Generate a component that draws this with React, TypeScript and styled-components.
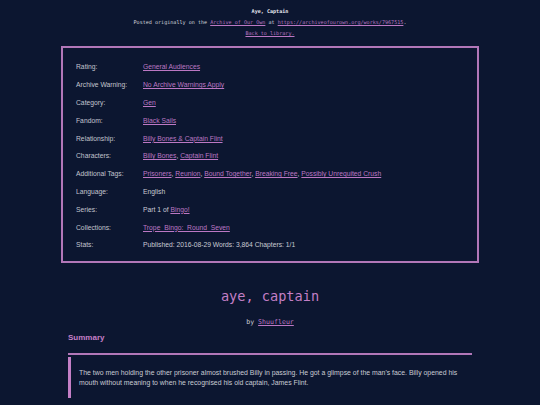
import React, { FC } from "react";
import styled, { createGlobalStyle } from "styled-components";

const GlobalStyle = createGlobalStyle`
  html, body {
    margin: 0;
    padding: 0;
    background: #0c1630;
  }
  body {
    font-family: "Liberation Sans", Arial, sans-serif;
    color: #c9cbd4;
  }
`;

const Page = styled.div`
  width: 540px;
  min-height: 405px;
  display: flex;
  flex-direction: column;
  align-items: center;
  background: #0c1630;
`;

const Header = styled.header`
  display: flex;
  flex-direction: column;
  align-items: center;
  padding-top: 6px;
  font-family: "DejaVu Sans Mono", "Liberation Mono", monospace;
  font-size: 5.1px;
  line-height: 11px;
  color: #d4d6de;
`;

const WorkTitle = styled.div`
  font-weight: 700;
  color: #e4e6ee;
`;

const Link = styled.a`
  color: #bc78c4;
  text-decoration: underline;
  text-underline-offset: 1px;
`;

const MetaBox = styled.dl`
  box-sizing: border-box;
  width: 418px;
  margin: 7px 0 0;
  padding: 10px 13px 7px;
  border: 2px solid #b277b8;
  display: grid;
  grid-template-columns: 67px 1fr;
  grid-auto-rows: 17.8px;
  align-items: center;
  font-size: 6.75px;
`;

const Label = styled.dt`
  margin: 0;
  color: #c3c5cf;
`;

const Value = styled.dd`
  margin: 0;
  color: #c9cbd4;
  white-space: nowrap;
`;

const Title = styled.h1`
  margin: 18px 0 0;
  font-family: "DejaVu Sans Mono", "Liberation Mono", monospace;
  font-weight: 400;
  font-size: 13.6px;
  line-height: 30px;
  color: #c47fc6;
`;

const Byline = styled.div`
  margin-top: 4px;
  font-family: "DejaVu Sans Mono", "Liberation Mono", monospace;
  font-size: 6.6px;
  line-height: 14px;
  color: #c9cbd4;
`;

const Summary = styled.section`
  width: 404px;
  margin-top: 2px;
`;

const SummaryHeading = styled.h2`
  margin: 0;
  padding-bottom: 8px;
  border-bottom: 2px solid #b277b8;
  font-size: 8px;
  line-height: 14px;
  font-weight: 700;
  color: #c47fc6;
`;

const Quote = styled.blockquote`
  margin: 2px 0 0;
  padding: 11px 12px 10px 8px;
  border-left: 3px solid #c47fc6;
  font-size: 6.9px;
  line-height: 10px;
  color: #c9cbd4;
`;

interface IMetaRow {
  label: string;
  value: React.ReactNode;
}

const links = (items: string[], sep = ", ") =>
  items.map((item, i) => (
    <React.Fragment key={item}>
      <Link href="#">{item}</Link>
      {i < items.length - 1 ? sep : null}
    </React.Fragment>
  ));

const metaRows: IMetaRow[] = [
  { label: "Rating:", value: links(["General Audiences"]) },
  { label: "Archive Warning:", value: links(["No Archive Warnings Apply"]) },
  { label: "Category:", value: links(["Gen"]) },
  { label: "Fandom:", value: links(["Black Sails"]) },
  { label: "Relationship:", value: links(["Billy Bones & Captain Flint"]) },
  { label: "Characters:", value: links(["Billy Bones", "Captain Flint"]) },
  {
    label: "Additional Tags:",
    value: links([
      "Prisoners",
      "Reunion",
      "Bound Together",
      "Breaking Free",
      "Possibly Unrequited Crush",
    ]),
  },
  { label: "Language:", value: "English" },
  {
    label: "Series:",
    value: (
      <>
        Part 1 of <Link href="#">Bingo!</Link>
      </>
    ),
  },
  {
    label: "Collections:",
    value: <Link href="#">Trope_Bingo:_Round_Seven</Link>,
  },
  {
    label: "Stats:",
    value: "Published: 2016-08-29 Words: 3,864 Chapters: 1/1",
  },
];

const App: FC = () => (
  <>
    <GlobalStyle />
    <Page>
      <Header>
        <WorkTitle>Aye, Captain</WorkTitle>
        <div>
          Posted originally on the <Link href="#">Archive of Our Own</Link> at{" "}
          <Link href="#">https://archiveofourown.org/works/7967515</Link>.
        </div>
        <Link href="#">Back to library.</Link>
      </Header>

      <MetaBox>
        {metaRows.map((row) => (
          <React.Fragment key={row.label}>
            <Label>{row.label}</Label>
            <Value>{row.value}</Value>
          </React.Fragment>
        ))}
      </MetaBox>

      <Title>aye, captain</Title>
      <Byline>
        by <Link href="#">Shuufleur</Link>
      </Byline>

      <Summary>
        <SummaryHeading>Summary</SummaryHeading>
        <Quote>
          The two men holding the other prisoner almost brushed Billy in
          passing. He got a glimpse of the man's face. Billy opened his mouth
          without meaning to when he recognised his old captain, James Flint.
        </Quote>
      </Summary>
    </Page>
  </>
);

export default App;
